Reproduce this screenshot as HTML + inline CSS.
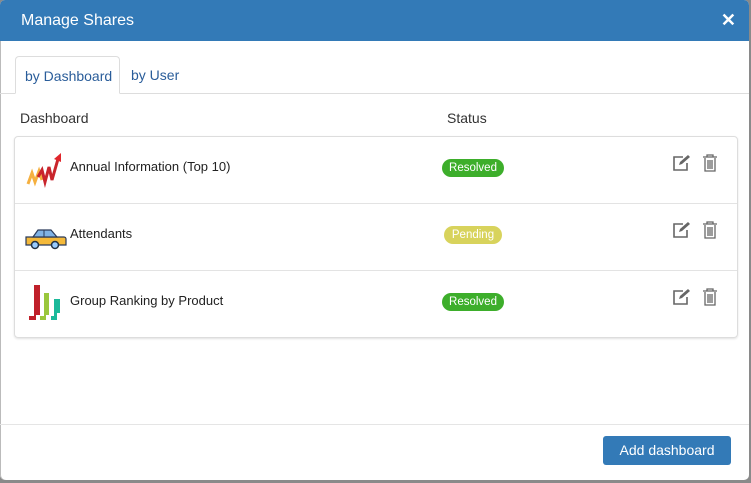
<!DOCTYPE html>
<html><head><style>
*{box-sizing:border-box;margin:0;padding:0}
body{width:751px;height:483px;background:#8a8a8a;font-family:"Liberation Sans",sans-serif;position:relative;overflow:hidden}
.modal{position:absolute;left:0;top:0;width:749px;height:480px;background:#fff;border-radius:5px;overflow:hidden;box-shadow:inset 1px 0 0 #bbb}
.hdr{height:41px;background:#337ab7;color:#fff;font-size:16px;padding:12px 0 0 21px;position:relative}
.x{position:absolute;right:13px;top:10px;font-size:18px;font-weight:bold}
.tabs{position:absolute;top:56px;left:0;right:0;height:38px;border-bottom:1px solid #ddd}
.tab{position:absolute;top:0;height:38px;font-size:14px;color:#2a5d9a;padding:11px 9px;white-space:nowrap}
.tab.a{left:15px;width:105px;border:1px solid #ddd;border-bottom:1px solid #fff;border-radius:4px 4px 0 0;background:#fff}
.th{position:absolute;top:110px;font-size:14px;color:#333}
.card{position:absolute;left:14px;top:136px;width:724px;height:202px;border:1px solid #ddd;border-radius:4px;box-shadow:0 1px 2px rgba(0,0,0,.12)}
.row{position:relative;height:67px;border-bottom:1px solid #e3e3e3}
.row:last-child{border-bottom:none}
.name{position:absolute;left:55px;top:22px;font-size:13px;color:#222}
.badge{position:absolute;top:22px;height:18px;line-height:18px;border-radius:9px;color:#fff;font-size:11.5px;text-align:center}
.g{background:#3dae2b;left:427px;width:62px}.y{background:#d8d35c;left:429px;width:58px}
.ic{position:absolute;left:10px;top:14px}
.ed{position:absolute;left:656px;top:17px}.tr{position:absolute;left:687px;top:17px}
.foot{position:absolute;top:424px;left:0;right:0;border-top:1px solid #e5e5e5}
.btn{position:absolute;left:603px;top:436px;width:128px;height:29px;background:#337ab7;border-radius:3px;color:#fff;font-size:14px;text-align:center;line-height:29px}
</style></head><body>
<div class="modal">
<div class="hdr">Manage Shares<span class="x">✕</span></div>
<div class="tabs"><div class="tab a">by Dashboard</div><div class="tab" style="left:122px">by User</div></div>
<div class="th" style="left:20px">Dashboard</div>
<div class="th" style="left:447px">Status</div>
<div class="card">
<div class="row">
<svg class="ic" width="40" height="40" viewBox="0 0 40 40"><polyline points="3,33 7,22 10,31 14,20 17,29" fill="none" stroke="#f5b040" stroke-width="3"/><polyline points="13,26 17,19 20,31 24,16 27,29 33,8" fill="none" stroke="#c9252c" stroke-width="3"/><polygon points="29,8 36,2 36,11" fill="#e0262c"/></svg>
<div class="name">Annual Information (Top 10)</div>
<div class="badge g">Resolved</div>
<svg class="ed" width="20" height="18" viewBox="0 0 20 18"><path d="M12 3H3v13h13V9" fill="none" stroke="#666" stroke-width="1.6"/><path d="M8 11l1-3 8-7 2 2-8 7z" fill="#666"/></svg>
<svg class="tr" width="16" height="18" viewBox="0 0 16 18"><path d="M1 3h14M5 3V1h6v2M3 4v13h10V4M6 6v9M8 6v9M10 6v9" fill="none" stroke="#666" stroke-width="1.3"/></svg>
</div>
<div class="row">
<svg class="ic" width="44" height="40" viewBox="0 0 44 40" style="left:9px"><path d="M2 19h38a2 2 0 0 1 2 2v6H2z" fill="#f4b93a" stroke="#2a3a5a" stroke-width="1.2"/><path d="M9 19l5-7h13l6 7z" fill="#7fb2e5" stroke="#2a3a5a" stroke-width="1.2"/><path d="M20 12v7" stroke="#2a3a5a"/><circle cx="11" cy="27" r="3.5" fill="#9cf" stroke="#234" stroke-width="1.5"/><circle cx="31" cy="27" r="3.5" fill="#9cf" stroke="#234" stroke-width="1.5"/></svg>
<div class="name">Attendants</div>
<div class="badge y">Pending</div>
<svg class="ed" width="20" height="18" viewBox="0 0 20 18"><path d="M12 3H3v13h13V9" fill="none" stroke="#666" stroke-width="1.6"/><path d="M8 11l1-3 8-7 2 2-8 7z" fill="#666"/></svg>
<svg class="tr" width="16" height="18" viewBox="0 0 16 18"><path d="M1 3h14M5 3V1h6v2M3 4v13h10V4M6 6v9M8 6v9M10 6v9" fill="none" stroke="#666" stroke-width="1.3"/></svg>
</div>
<div class="row">
<svg class="ic" width="40" height="40" viewBox="0 0 40 40"><path d="M9 0h6v30h-4v5H4v-4h5z" fill="#c0202a"/><path d="M19 8h5v22h-3v5h-6v-4h4z" fill="#9ac73c"/><path d="M29 14h6v14h-3v7h-6v-4h3z" fill="#1bb99a"/></svg>
<div class="name">Group Ranking by Product</div>
<div class="badge g">Resolved</div>
<svg class="ed" width="20" height="18" viewBox="0 0 20 18"><path d="M12 3H3v13h13V9" fill="none" stroke="#666" stroke-width="1.6"/><path d="M8 11l1-3 8-7 2 2-8 7z" fill="#666"/></svg>
<svg class="tr" width="16" height="18" viewBox="0 0 16 18"><path d="M1 3h14M5 3V1h6v2M3 4v13h10V4M6 6v9M8 6v9M10 6v9" fill="none" stroke="#666" stroke-width="1.3"/></svg>
</div>
</div>
<div class="foot"></div>
<div class="btn">Add dashboard</div>
</div>
</body></html>
